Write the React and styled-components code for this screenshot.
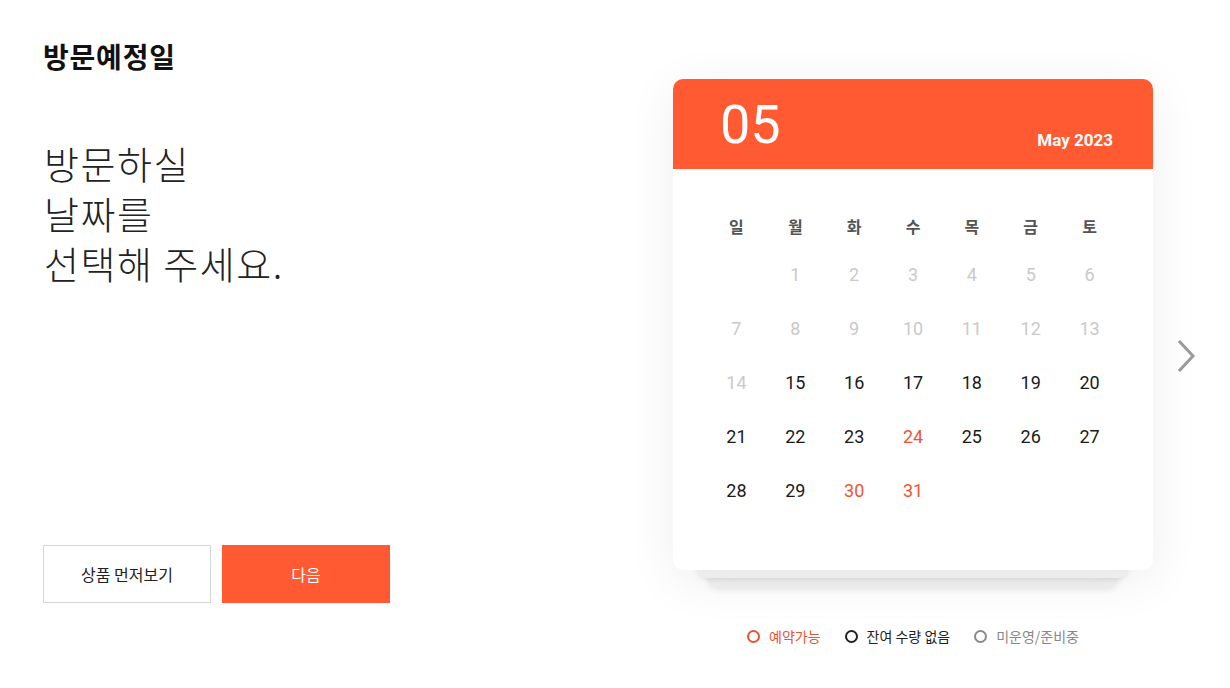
import React from "react"
import styled, { createGlobalStyle } from "styled-components"

const ORANGE = "#ff5a31"

const GlobalStyle = createGlobalStyle`
  html, body {
    margin: 0;
    padding: 0;
    background: #fff;
  }
  body {
    font-family: "Noto Sans CJK KR", "Noto Sans", sans-serif;
    color: #111;
  }
`

const Page = styled.div`
  display: flex;
  width: 1230px;
  height: 688px;
  box-sizing: border-box;
`

const Left = styled.div`
  width: 673px;
  box-sizing: border-box;
  padding: 36px 0 0 43px;
  display: flex;
  flex-direction: column;
`

const Title = styled.h1`
  margin: 0;
  font-size: 28px;
  font-weight: 700;
  line-height: 40px;
  letter-spacing: 0.8px;
`

const Lead = styled.p`
  margin: 62px 0 0 1px;
  font-family: "Noto Sans CJK KR Light", "Noto Sans CJK KR", sans-serif;
  font-size: 38px;
  font-weight: 300;
  line-height: 50px;
  letter-spacing: 1.5px;
  color: #222;
`

const Buttons = styled.div`
  display: flex;
  gap: 11px;
  margin-top: 257px;
`

const Button = styled.button`
  width: 168px;
  height: 58px;
  box-sizing: border-box;
  font-family: inherit;
  font-size: 16px;
  cursor: pointer;
  border: 1px solid ${({ primary }) => (primary ? ORANGE : "#d6d6d6")};
  background: ${({ primary }) => (primary ? ORANGE : "#fff")};
  color: ${({ primary }) => (primary ? "#fff" : "#222")};
`

const Right = styled.div`
  padding-top: 79px;
  display: flex;
  flex-direction: column;
`

const CalendarRow = styled.div`
  display: flex;
  align-items: flex-start;
`

const CardStack = styled.div`
  position: relative;
  width: 480px;

  &::before,
  &::after {
    content: "";
    position: absolute;
    border-radius: 10px;
    background: #f2f2f2;
  }
  &::before {
    left: 35px;
    right: 35px;
    bottom: -17px;
    height: 40px;
    box-shadow: 0 3px 6px rgba(0, 0, 0, 0.08);
  }
  &::after {
    left: 24px;
    right: 25px;
    bottom: -8px;
    height: 40px;
    background: #f6f6f6;
    box-shadow: 0 2px 5px rgba(0, 0, 0, 0.08);
  }
`

const Card = styled.div`
  position: relative;
  z-index: 1;
  background: #fff;
  border-radius: 10px;
  overflow: hidden;
  box-shadow: 0 10px 50px rgba(0, 0, 0, 0.07);
`

const Header = styled.div`
  height: 90px;
  background: ${ORANGE};
  color: #fff;
  display: flex;
  align-items: flex-end;
  justify-content: space-between;
  padding: 0 40px 20px 47px;
  box-sizing: border-box;
  font-family: Roboto, "Noto Sans", sans-serif;
`

const BigMonth = styled.div`
  font-size: 54px;
  font-weight: 400;
  line-height: 1;
  margin-bottom: -3px;
`

const MonthLabel = styled.div`
  font-size: 17px;
  font-weight: 700;
  line-height: 1;
`

const Grid = styled.div`
  display: grid;
  grid-template-columns: repeat(7, 1fr);
  grid-template-rows: 42px;
  grid-auto-rows: 54px;
  padding: 36px 34px 53px;
  font-family: Roboto, "Noto Sans CJK KR", sans-serif;
`

const WeekDay = styled.div`
  display: flex;
  align-items: center;
  justify-content: center;
  font-family: "Noto Sans CJK KR", sans-serif;
  font-size: 16px;
  font-weight: 700;
  color: #555;
`

const tone = {
  off: "#c9c9c9",
  on: "#1a1a1a",
  hot: "#ee5533",
}

const Day = styled.div`
  display: flex;
  align-items: center;
  justify-content: center;
  font-size: 18px;
  color: ${({ state }) => tone[state]};
`

const NextArrow = styled.button`
  margin: 260px 0 0 23px;
  padding: 0;
  border: none;
  background: none;
  cursor: pointer;
  display: flex;
`

const Legend = styled.div`
  display: flex;
  justify-content: center;
  gap: 24px;
  width: 480px;
  margin-top: 56px;
  font-size: 14px;
`

const LegendItem = styled.div`
  display: flex;
  align-items: center;
  gap: 9px;
  color: ${({ color }) => color};
`

const Dot = styled.span`
  width: 13px;
  height: 13px;
  box-sizing: border-box;
  border-radius: 50%;
  border: 2px solid ${({ color }) => color};
`

const weekDays = ["일", "월", "화", "수", "목", "금", "토"]

const days = [null]
for (let d = 1; d <= 31; d++) {
  let state = "on"
  if (d <= 14) state = "off"
  if (d === 24 || d === 30 || d === 31) state = "hot"
  days.push({ d, state })
}

const legend = [
  { label: "예약가능", color: "#e8542f", dot: "#e8542f" },
  { label: "잔여 수량 없음", color: "#222", dot: "#222" },
  { label: "미운영/준비중", color: "#888", dot: "#888" },
]

export default function App() {
  return (
    <>
      <GlobalStyle />
      <Page>
        <Left>
          <Title>방문예정일</Title>
          <Lead>
            방문하실
            <br />
            날짜를
            <br />
            선택해 주세요.
          </Lead>
          <Buttons>
            <Button>상품 먼저보기</Button>
            <Button primary>다음</Button>
          </Buttons>
        </Left>
        <Right>
          <CalendarRow>
            <CardStack>
              <Card>
                <Header>
                  <BigMonth>05</BigMonth>
                  <MonthLabel>May 2023</MonthLabel>
                </Header>
                <Grid>
                  {weekDays.map(w => (
                    <WeekDay key={w}>{w}</WeekDay>
                  ))}
                  {days.map((day, i) =>
                    day ? (
                      <Day key={i} state={day.state}>
                        {day.d}
                      </Day>
                    ) : (
                      <Day key={i} state="off" />
                    )
                  )}
                </Grid>
              </Card>
            </CardStack>
            <NextArrow aria-label="다음 달">
              <svg width="20" height="34" viewBox="0 0 20 34">
                <path
                  d="M3 2 L17 17 L3 32"
                  fill="none"
                  stroke="#9a9a9a"
                  strokeWidth="3"
                />
              </svg>
            </NextArrow>
          </CalendarRow>
          <Legend>
            {legend.map(l => (
              <LegendItem key={l.label} color={l.color}>
                <Dot color={l.dot} />
                {l.label}
              </LegendItem>
            ))}
          </Legend>
        </Right>
      </Page>
    </>
  )
}
